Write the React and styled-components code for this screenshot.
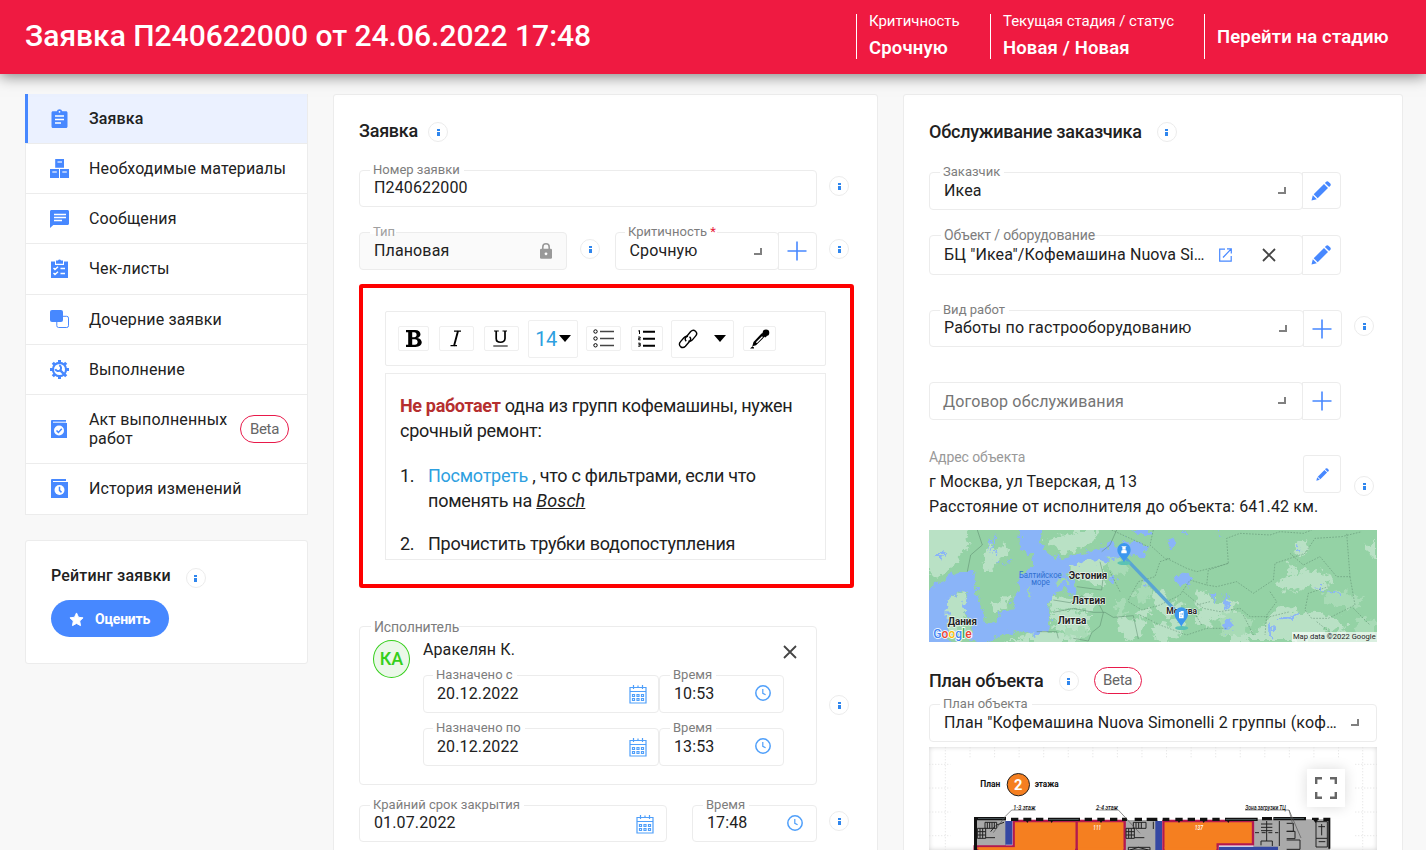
import React from "react";
import styled, { createGlobalStyle, css } from "styled-components";

const blue = "#4788ff";
const line = "#ececec";
const ink = "#212121";

const GlobalStyle = createGlobalStyle`
  * { box-sizing: border-box; }
  html, body { margin: 0; padding: 0; height: 850px; overflow: hidden; }
  body {
    background: #f8f8f8;
    color: ${ink};
    font-family: Roboto, "Liberation Sans", sans-serif;
    font-size: 16px;
    line-height: 19px;
  }
`;

/* ---------- page frame ---------- */
const Page = styled.div`
  width: 1426px;
  height: 850px;
  overflow: hidden;
  display: flex;
  flex-direction: column;
`;
const Header = styled.header`
  flex: none;
  height: 74px;
  padding: 0 25px;
  display: flex;
  align-items: flex-start;
  justify-content: space-between;
  background: #ef1a41;
  color: #fff;
  box-shadow: 0 2px 14px rgba(0, 0, 0, 0.5);
  position: relative;
`;
const PageTitle = styled.h1`
  margin: 18px 0 0;
  font-size: 30px;
  line-height: 35px;
  font-weight: 500;
`;
const HeaderInfo = styled.div`
  display: flex;
  margin-top: 14px;
`;
const HeaderCell = styled.div`
  width: ${(p) => p.$w}px;
  height: 45px;
  border-left: 1px solid #fff;
  padding-left: 12px;
  white-space: nowrap;
  ${(p) => p.$center && css`
    display: flex;
    align-items: center;
    padding: 0 0 0 12px;
  `}
`;
const HeaderLabel = styled.div`
  font-size: 15px;
  line-height: 16px;
  letter-spacing: -0.03px;
  margin-top: -1px;
`;
const HeaderValue = styled.div`
  font-size: 18.500px;
  line-height: 22px;
  font-weight: 600;
  letter-spacing: 0.15px;
  margin-top: ${(p) => p.$mt || 0}px;
`;
const Main = styled.main`
  flex: 1;
  min-height: 0;
  display: grid;
  grid-template-columns: 283px 545px 500px;
  column-gap: 25px;
  padding: 20px 0 0 25px;
`;
const Card = styled.section`
  background: #fff;
  border: 1px solid ${line};
  border-radius: 3px;
  padding: 0 25px;
`;
const ColumnCard = styled(Card)`
  margin-bottom: -12px;
`;
const Row = styled.div`
  display: flex;
  align-items: flex-start;
  height: ${(p) => p.$h}px;
  margin-top: ${(p) => p.$mt || 0}px;
`;
const SectionTitle = styled.h2`
  margin: ${(p) => p.$mt || 0}px ${(p) => p.$mr || 0}px 0 0;
  font-size: ${(p) => p.$size || 18}px;
  line-height: 21px;
  font-weight: 500;
  white-space: nowrap;
  letter-spacing: ${(p) => p.$ls ?? -0.25}px;
`;

/* ---------- small parts ---------- */
const InfoCircle = styled.span`
  flex: none;
  width: 20px;
  height: 20px;
  border: 1px solid ${line};
  border-radius: 50%;
  background: #fff;
  display: flex;
  flex-direction: column;
  align-items: center;
  justify-content: center;
  gap: 1px;
  margin: ${(p) => p.$mt || 0}px 0 0 ${(p) => p.$ml || 0}px;
  &::before, &::after {
    content: "";
    width: 3px;
    height: 2px;
    background: #2f86ee;
  }
  &::after { height: 4px; }
`;
const Beta = styled.span`
  flex: none;
  width: ${(p) => p.$w}px;
  height: ${(p) => p.$h}px;
  border: 1px solid #e8194a;
  border-radius: 14px;
  color: #666;
  font-size: 15px;
  letter-spacing: -0.35px;
  display: flex;
  align-items: center;
  justify-content: center;
`;

/* ---------- navigation ---------- */
const Side = styled.aside`
  display: flex;
  flex-direction: column;
`;
const Nav = styled.nav`
  background: #fff;
  border: solid ${line};
  border-width: 0 1px;
`;
const NavItem = styled.a`
  height: ${(p) => p.$h}px;
  display: flex;
  align-items: center;
  border-bottom: 1px solid ${line};
  padding: 0 18px ${(p) => (p.$h === 51 ? 1 : 0)}px 24px;
  ${(p) => p.$active && css`
    background: #ebf1ff;
    box-shadow: inset 3px 0 0 ${blue};
    margin-left: -1px;
    padding-left: 25px;
    font-weight: 500;
  `}
`;
const NavIcon = styled.svg`
  flex: none;
  width: 20px;
  height: 20px;
  margin-right: 19px;
`;
const NavText = styled.span`
  flex: 1;
  letter-spacing: 0.13px;
`;
const RatingCard = styled(Card)`
  height: 124px;
  margin-top: 25px;
`;
const RateButton = styled.button`
  width: 118px;
  height: 37px;
  margin-top: 12px;
  border: 0;
  border-radius: 19px;
  background: ${blue};
  color: #fff;
  font: 700 14px/19px Roboto, sans-serif;
  letter-spacing: -0.2px;
  display: flex;
  align-items: center;
  padding: 1px 0 0 18px;
  gap: 11px;
`;

/* ---------- form ---------- */
const FieldBox = styled.div`
  position: relative;
  flex: none;
  display: flex;
  width: ${(p) => p.$w}px;
  height: ${(p) => p.$h || 38}px;
  border: 1px solid ${line};
  border-radius: 4px;
  margin-left: ${(p) => p.$ml || 0}px;
  padding: ${(p) => (p.$pt ?? 8)}px 14px 0 ${(p) => (p.$pl ?? 14)}px;
  background: ${(p) => (p.$disabled ? "#fafafa" : "#fff")};
`;
const FieldLabel = styled.label`
  position: absolute;
  left: ${(p) => p.$x ?? 10}px;
  top: ${(p) => p.$y ?? -9}px;
  padding: 0 ${(p) => p.$pr ?? 4}px 0 3px;
  font-size: ${(p) => (p.$large ? 14 : 13)}px;
  line-height: ${(p) => (p.$large ? 16 : 15)}px;
  letter-spacing: ${(p) => (p.$large ? -0.14 : 0.02)}px;
  color: ${(p) => (p.$pale ? "#a0a0a0" : "#7d7d7d")};
  white-space: nowrap;
  background: linear-gradient(#fff, #fff) 0 7px / 100% 3px no-repeat;
  i { color: #e8203a; font-style: normal; }
`;
const FieldValue = styled.span`
  letter-spacing: ${(p) => p.$vls ?? 0.13}px;
  white-space: nowrap;
  color: ${(p) => (p.$pale ? "#757575" : ink)};
`;
const FieldTools = styled.span`
  position: absolute;
  right: ${(p) => p.$r}px;
  top: ${(p) => p.$t}px;
  display: flex;
`;
const Corner = styled.span`
  width: 8px;
  height: 7px;
  border: solid #808080;
  border-width: 0 2px 2px 0;
`;
const SideButton = styled.button`
  flex: none;
  width: ${(p) => p.$w || 39}px;
  height: ${(p) => p.$h || 38}px;
  margin: ${(p) => p.$mt || 0}px 0 0 ${(p) => p.$ml ?? -1}px;
  padding: 0 ${(p) => p.$pr ?? 1}px 0 0;
  border: 1px solid ${line};
  border-radius: ${(p) => (p.$solo ? "3px" : "0 4px 4px 0")};
  background: #fff;
  display: flex;
  align-items: center;
  justify-content: center;
  position: relative;
`;

/* ---------- editor ---------- */
const Highlight = styled.div`
  width: 495px;
  height: 304px;
  margin-top: 14px;
  border: 4px solid #fe0000;
  border-radius: 3px;
  padding: 23px 24px 0 22px;
`;
const Toolbar = styled.div`
  height: 55px;
  border: 1px solid ${line};
  border-radius: 2px;
  display: flex;
  align-items: center;
  padding-left: 12px;
`;
const Tool = styled.button`
  flex: none;
  width: ${(p) => p.$w}px;
  height: ${(p) => (p.$tall ? 38 : 25)}px;
  margin: 0 ${(p) => p.$mr}px 0 0;
  padding: 0 ${(p) => p.$pr ?? 1}px 0 0;
  border: 1px solid #efefef;
  border-radius: 2px;
  background: #fff;
  display: flex;
  align-items: center;
  justify-content: center;
`;
const SizeText = styled.span`
  font: 400 20px/24px Roboto, sans-serif;
  letter-spacing: -0.6px;
  color: #2ea0e0;
  margin: 0 2px 0 1px;
`;
const Caret = styled.span`
  border: solid transparent;
  border-width: 7px 6px 0;
  border-top-color: #000;
  margin: 0 0 1px ${(p) => p.$ml || 0}px;
`;
const EditorBody = styled.div`
  height: 187px;
  margin-top: 7px;
  border: 1px solid ${line};
  padding: 19px 14px 0;
  font-size: 18px;
  line-height: 25px;
  letter-spacing: -0.26px;
  overflow: hidden;
`;
const EditorText = styled.p`
  margin: 0;
  white-space: nowrap;
  b { color: #b62f2f; font-weight: 700; letter-spacing: -0.35px; }
`;
const EditorItem = styled.div`
  display: grid;
  grid-template-columns: 28px 1fr;
  margin-top: ${(p) => p.$mt}px;
  white-space: nowrap;
  a { color: #2ea0e0; }
  i { letter-spacing: 0.1px; }
`;

/* ---------- performer ---------- */
const Performer = styled.div`
  position: relative;
  width: 458px;
  height: 159px;
  border: 1px solid ${line};
  border-radius: 4px;
  padding: 13px 0 0 13px;
  display: flex;
`;
const Avatar = styled.div`
  width: 37px;
  height: 38px;
  border: 1px solid #35cf1b;
  border-radius: 50%;
  background: #ebf8e9;
  color: #35cf1b;
  font-size: 18px;
  font-weight: 500;
  display: flex;
  align-items: center;
  justify-content: center;
  padding-bottom: 2px;
  margin-right: 13px;
`;
const PerformerBody = styled.div`
  width: 361px;
`;
const PerformerHead = styled.div`
  display: flex;
  justify-content: space-between;
  height: 35px;
  span { letter-spacing: 0.1px; }
  svg { margin: 5px -13px 0 0; }
`;

/* ---------- address, map, plan ---------- */
const Address = styled.div`
  width: 374px;
  white-space: nowrap;
  line-height: 25px;
  letter-spacing: 0.13px;
  small {
    display: block;
    font-size: 14px;
    line-height: 20px;
    letter-spacing: -0.08px;
    color: #999;
    padding-bottom: 2px;
  }
`;
const BetaSlot = styled.div`
  margin-left: 15px;
`;
const Drawing = styled.svg`
  display: block;
  width: 448px;
  height: ${(p) => p.$h}px;
  margin-top: ${(p) => p.$mt || 0}px;
`;
const PlanFrame = styled.div`
  position: relative;
  width: 448px;
  margin-top: 5px;
  box-shadow: inset 0 0 5px rgba(0, 0, 0, 0.18);
`;
const FullscreenButton = styled.button`
  position: absolute;
  left: 378px;
  top: 22px;
  width: 38px;
  height: 38px;
  padding: 0 1px 0 0;
  border: 0;
  background: #fff;
  box-shadow: 0 0 14px rgba(0, 0, 0, 0.14);
  display: flex;
  align-items: center;
  justify-content: center;
`;

/* ---------- icons ---------- */
const navIcons = {
  request: (
    <g>
      <path fill={blue} d="M3 2.3h3.800a2.800 2.800 0 0 1 5.400 0H16c.9 0 1.500.6 1.500 1.500v13.700c0 .9-.6 1.500-1.500 1.500H3c-.9 0-1.500-.6-1.500-1.500V3.800c0-.9.6-1.500 1.500-1.500z" />
      <circle cx="9.500" cy="2.800" r=".9" fill="#fff" />
      <path stroke="#fff" strokeWidth="1.500" d="M5 7h9M5 10.500h9M5 14h6" />
    </g>
  ),
  boxes: (
    <g fill={blue}>
      <path d="M5.200 0h8.800v8.800H5.200zM0 10h9v9H0zM10 10h9v9h-9z" />
      <path stroke="#cfe0ff" strokeWidth="1.400" d="M7.500 3h4.500M2.300 13h4.500M12.300 13h4.500" />
    </g>
  ),
  chat: (
    <g>
      <path fill={blue} d="M1.500 1h16c.9 0 1.500.6 1.500 1.500v12c0 .9-.6 1.500-1.500 1.500H3.300L0 19V2.500C0 1.600.6 1 1.500 1z" />
      <path stroke="#fff" strokeWidth="1.500" d="M4 5.500h12M4 8.500h12M4 11.500h8" />
    </g>
  ),
  checklist: (
    <g>
      <path fill={blue} d="M1 2.500h17V19H1z" />
      <path fill="#fff" d="M5 2h9v4H5z" />
      <path fill={blue} d="M6 1.500h2a1.600 1.600 0 0 1 3 0h2v3.200H6z" />
      <path fill="none" stroke="#fff" strokeWidth="1.400" d="M3.500 9l1.500 1.600L8 7.800M3.500 14l1.500 1.600L8 12.800M10.500 9.500H15M10.500 14.500H15" />
    </g>
  ),
  copies: (
    <g>
      <rect x="6.800" y="6.300" width="11.700" height="11.200" rx="1.800" fill="#fff" stroke={blue} />
      <rect x="0" y="0" width="13" height="12" rx="2" fill={blue} />
    </g>
  ),
  gear: (
    <g>
      <circle cx="9.500" cy="9.500" r="6.600" fill="none" stroke={blue} strokeWidth="2.200" />
      <g stroke={blue} strokeWidth="3">
        <path d="M9.500 0v3M9.500 16v3M0 9.500h3M16 9.500h3M2.800 2.800l2 2M14.200 14.200l2 2M2.800 16.200l2-2M14.200 4.800l2-2" />
      </g>
      <path fill="none" stroke={blue} strokeWidth="2.400" d="M9.800 9.800l4.500 4.500" />
      <path fill="none" stroke={blue} strokeWidth="2" d="M9.200 5.200a3 3 0 1 1-3.900 3.900" />
    </g>
  ),
  act: (
    <g>
      <path fill={blue} d="M1.500 1H16v3h1v15H1V2z" />
      <path stroke="#fff" strokeWidth="1" d="M3 3.200h13" />
      <circle cx="9" cy="11.500" r="5" fill="#fff" />
      <path fill="none" stroke={blue} strokeWidth="1.500" d="M6.500 11.500l1.900 1.900 3.400-3.600" />
    </g>
  ),
  history: (
    <g>
      <path fill={blue} d="M1.500 0H16v3h2v16H1V1z" />
      <path stroke="#fff" strokeWidth="1" d="M3 2.500h13" />
      <circle cx="9.500" cy="11" r="5" fill="#fff" />
      <path fill="none" stroke={blue} strokeWidth="1.500" d="M9.500 7.800V11.400l2 2" />
    </g>
  ),
};

const Pencil = ({ size = 20 }) => (
  <svg width={size} height={size} viewBox="0 0 20 20" fill={blue}>
    <path d="M.5 19.500l1.300-5.300 4 4zM2.700 13.300L13 3l4 4L6.700 17.300zM13.900 1.900l1-1a2 2 0 0 1 2.800 0l1.400 1.400a2 2 0 0 1 0 2.800l-1 1z" />
  </svg>
);
const Plus = () => (
  <svg width="20" height="20" viewBox="0 0 20 20">
    <path stroke={blue} strokeWidth="1.600" d="M10 .5v19M.5 10h19" />
  </svg>
);
const Cross = () => (
  <svg width="14" height="14" viewBox="0 0 14 14">
    <path stroke="#444" strokeWidth="1.800" d="M1 1l12 12M13 1L1 13" />
  </svg>
);
const External = () => (
  <svg width="13" height="14" viewBox="0 0 13 14">
    <path fill="none" stroke={blue} strokeWidth="1.200" d="M6 1.200H.7v12h11.500V8M8 .9h4.300v4.500M12 1.200L4 9.500" />
  </svg>
);
const Lock = () => (
  <svg width="12" height="16" viewBox="0 0 12 16">
    <path fill="none" stroke="#999" strokeWidth="1.600" d="M2.800 6.500V4a3.200 3.200 0 0 1 6.400 0v2.500" />
    <rect y="5.800" width="12" height="10" rx="1.300" fill="#999" />
    <circle cx="6" cy="10.800" r="1.400" fill="#fff" />
  </svg>
);
const Clock = () => (
  <svg width="16" height="16" viewBox="0 0 16 16" fill="none" stroke="#4f9ffa">
    <circle cx="8" cy="8" r="7.200" strokeWidth="1.500" />
    <path strokeWidth="1.200" d="M7.800 4v4.300l2.800 1.500" />
  </svg>
);
const Calendar = () => (
  <svg width="18" height="19" viewBox="0 0 18 19" fill="none" stroke="#4f9ffa">
    <path strokeWidth="1.200" d="M1 2.500h16v15.500H1zM1 6.500h16M4.500 0v4M13.500 0v4M9 .5v2" />
    <path strokeWidth="1.200" d="M3.500 9.500h2v2h-2zM8 9.500h2v2H8zM12.500 9.500h2v2h-2zM3.500 13.500h2v2h-2zM8 13.500h2v2H8zM12.500 13.500h2v2h-2z" />
  </svg>
);
const Star = () => (
  <svg width="15" height="15" viewBox="0 0 24 24" fill="#fff" stroke="#fff" strokeWidth="1.500" strokeLinejoin="round">
    <path d="M12 1.500l3.200 6.900 7.300.9-5.400 5.100 1.400 7.400L12 18.200l-6.500 3.600 1.400-7.400L1.500 9.300l7.300-.9z" />
  </svg>
);
const BoldIcon = () => (
  <svg width="16" height="17" viewBox="0 0 16 17">
    <path fillRule="evenodd" d="M0 0h9c6.500 0 7.200 6.700 2.200 8 6.600 1 6 9-1.700 9H0v-2.200h2.200V2.200H0zM6.200 2.200v5h2c3.200 0 3.200-5 0-5zM6.200 9.300v5.500h2.600c3.800 0 3.800-5.500 0-5.500z" />
  </svg>
);
const ItalicIcon = () => (
  <svg width="12" height="17" viewBox="0 0 12 17" fill="none" stroke="#000">
    <path strokeWidth="1.200" d="M4 1.100h7M.5 15.700h6.500" />
    <path strokeWidth="1.900" d="M8 1L4 16" />
  </svg>
);
const UnderlineIcon = () => (
  <svg width="15" height="17" viewBox="0 0 15 17" fill="none" stroke="#000">
    <path strokeWidth="1.200" d="M1 1h4.800M9.500 1H14M.3 16h14.400" />
    <path strokeWidth="1.700" d="M3.200 1v7.500c0 5 8.800 5 8.800 0V1" />
  </svg>
);
const BulletsIcon = () => (
  <svg width="21" height="19" viewBox="0 0 21 19" fill="none" stroke="#000">
    <path d="M7 2.500h14M7 9.500h14M7 16.500h14" strokeWidth="1.300" stroke="#444" />
    <circle cx="2.500" cy="2.500" r="1.700" />
    <circle cx="2.500" cy="9.500" r="1.700" />
    <circle cx="2.500" cy="16.300" r="1.700" />
  </svg>
);
const NumbersIcon = () => (
  <svg width="17" height="17" viewBox="0 0 17 17" fill="none" stroke="#000">
    <path strokeWidth="1.900" d="M5 1.800h12M5 8.700h12M5 15.700h12" />
    <path strokeWidth="1" d="M.3 1L1.500.5V4M.2 7h2v1.300H.6v1.500h2M.2 13.200h2v3H.2M.5 14.700h1.500" />
  </svg>
);
const LinkIcon = () => (
  <svg width="20" height="20" viewBox="0 0 20 20" fill="none" stroke="#000" strokeWidth="1.400">
    <path d="M8.200 12.200c-1.600-1.600-1.200-3 0-4.200l4.500-5.500c1.400-1.400 3.400-1.500 4.800-.3 1.400 1.300 1.500 3.200.2 4.700l-3.500 4.200c-1.200 1.200-2.500 1.500-3.800.8" />
    <path d="M11.500 7.800c1.700 1.500 1.300 3.200.2 4.500l-4.300 5c-1.400 1.400-3.500 1.500-4.900.3-1.400-1.300-1.500-3.300-.2-4.700l3.600-4.100C7 7.600 8.700 7 10 7.600" />
  </svg>
);
const DropperIcon = () => (
  <svg width="20" height="20" viewBox="0 0 20 20">
    <circle cx="16" cy="3.800" r="3.300" />
    <path d="M13.300 3.300l3.700 3.600-1.800 1.700-3.800-3.600z" />
    <path fillRule="evenodd" d="M11.500 4.500L3.500 13l-1.200 4.200 3.700-1 8.800-8.600zM12 7.200l1 .9-5.600 5.700-1.400.3.400-1.300z" />
    <path d="M0 19.500l2.500-2.300 1.500 1.400v.9z" />
  </svg>
);
const FullscreenIcon = () => (
  <svg width="22" height="22" viewBox="0 0 22 22" fill="none" stroke="#666" strokeWidth="2.400">
    <path d="M1.200 7V1.200H7M15 1.200h5.800V7M1.200 15v5.800H7M20.800 15v5.800H15" />
  </svg>
);

/* ---------- map and floor plan ---------- */
const MapDrawing = () => (
  <Drawing $h={112} $mt={11} viewBox="27 15 1344 336">
    <defs>
      <filter id="coast" x="0" y="0" width="100%" height="100%" colorInterpolationFilters="sRGB">
        <feTurbulence type="fractalNoise" baseFrequency="0.05" numOctaves="3" seed="4" />
        <feDisplacementMap in="SourceGraphic" scale="42" xChannelSelector="R" yChannelSelector="G" />
      </filter>
    </defs>
    <rect x="27" y="15" width="1344" height="336" fill="#94d2a5" />
    <g filter="url(#coast)">
      <rect x="0" y="-10" width="1400" height="390" fill="#94d2a5" />
      <g fill="#b9e1c5">
        <path d="M20 0h135l-20 45 20 25-40 20-10 35-40 25-45-10z" />
        <path d="M180 90l30-30 25 10 20-15 10 30-30 20-20 40-20-10zM215 235l60-30-15 35-35 25z" />
        <path d="M380 45l50-15 50-15 55 0-10 35-60 30-40 5z" />
        <path d="M80 215l60-15-5 60 15 55-55 20-20-50zM165 275l30 5 15 45-45 5z" />
        <path d="M455 120l55-15 50 0-10 30 5 45-40 0-30-10-30-20zM395 210l60 15 60-25 20 40-30 25-50-15-65 10zM395 262l60-8 60 22-10 35-40 20-60-20z" />
        <path d="M590 270l30 10 40 0 20 15-20 40-35 15-30-30zM640 262l40-12 20 16-30 14zM700 195l30 5 20 40 30-15 20 20-40 20-20 20-20-25-20-30zM705 290l40 10 20-20 30 20-20 35-60 16-20-25zM830 195l30 10 20 25 50-5 20 20-20 30-40 5-30 30-30-20 10-35-15-25z" />
        <path d="M1075 170l40-25 40-10 40 5 40 15 0 20-40 20-30-10-40 15-50-10zM1080 245l60 20 50-5 60 20 30 20-10 25-50-10-40 30H970l60-45zM930 330l40-10 20 31h-60z" />
        <path d="M1125 60l25-15 15 25-20 30-25-15zM1105 115l30 15-20 20zM1340 60l31-20v60l-25-5zM290 340l90-22 110 20-30 13H250zM570 115l25-20 10 20-20 20z" />
      </g>
      <g fill="#a8dbb6">
        <path d="M560 95l50 8 15 35-50 15zM640 205l40-35 15 40-45 30zM900 275l50-15 50 25-35 45-55 0zM1210 205l70-10 50 35-40 25-70-20z" />
        <path d="M1315 275l56 10v60h-60zM435 305l70 10-20 25-50-8zM590 225l20 0 5 40-20 10z" />
      </g>
      <path fill="#8ab4f8" d="M10 195L65 170L75 160L100 150L140 142L160 130L168 150L165 185L180 225L192 270L200 290L232 288L245 255L285 240L295 200L290 170L300 150L340 125L335 95L300 70L296 40L303 0L372 0L362 50L375 75L405 100L450 95L500 80L545 65L590 55L602 85L590 100L540 108L500 110L455 122L445 150L462 165L470 195L462 212L440 190L400 205L385 245L395 290L390 315L350 330L290 318L260 325L220 345L190 360L150 345L160 300L140 270L130 240L145 205L120 198L90 215L80 250L80 300L95 370L10 370Z" />
      <g fill="#8ab4f8">
        <path d="M612 48l25-5 25 12 16 15-5 22-35 3-25-17zM635 10h50l8 20-25 3-20-8zM742 50l18-13 10 18-13 18-8-13zM770 150l18-4 30 15-10 18-22-5-3 18-15-13zM572 150l10-5 3 28-11-4zM868 207l20 5-5 20zM914 207l12 15-5 35-8-10zM910 302l20-20 12 22-15 18zM1080 276l33 0 28-17 4 6-28 20-37-3zM1050 300l7-5 4 45-9 0zM1132 62l9 9-3 12-7-7zM1222 196l44 15-4 6-40-15zM665 170l16 6-5 8z" />
        <path d="M225 35l8-4-8 42-8 24zM50 90l22-9-8 26zM206 45l8 0-5 40zM265 100l7 7-16 14zM232 105l10 5-9 9zM780 20l22 5-9 7zM890 20l9 5-6 13zM1192 180l12 4 7 10-18-6z" />
      </g>
      <g fill="#9ed6ad">
        <path d="M326 188l9-4-7 38-7-4zM279 212l9-4-10 20zM410 165l26-6 7 13-28 10zM412 148l16 0-5 9zM120 295l30 0 8 22-18 16-26-8z" />
      </g>
    </g>
    <g fill="none" stroke="#59876b" strokeWidth="1.500">
      <path d="M142 140l10-50 35-30-15-45M590 15l-20 45-25 20M540 110l10 40-5 45-75-10M400 225l50 8 35-20 50 20 15 30-10 40-25 20-10 25-45-8M400 262l60-12 60 12 35 0 25 15 60-5 15 70M350 320l60 0 5 20" />
      <g strokeDasharray="5 4">
        <path d="M625 225l30-55 50-15 15-45 30-10M600 200l-30-60M700 15l-10 45 50 45M740 100l60 30 30 10 60-15 35-10-5-75 40-15 90 5 30-10 70 5 25-10M925 115l-60 20-5 45 30 5 60-15 50 35 60-40 5-50 90-30 30-45 80-5 60-15M1110 85l40 35 50-25 50 60 40 0-10-130M1290 155l15 85-80 40-50 0-20-25 10-50 60-20M625 230l40 25 55-15 60-30 30-45 50 15M660 270l60 30 80 30 60-20 60 0M790 200l60 50 50 10 60-10 30 25 60 0 60-15M845 300l-30-50M870 230l-40 10M1050 200l20 30-30 40-5 60" />
        <path d="M970 270l30 60M1190 290l50 40M1300 250l50 50M575 15l110 50" />
      </g>
    </g>
    <path d="M612 95L784 275" stroke="#5aa5d3" strokeWidth="10" />
    <ellipse cx="612" cy="114" rx="20" ry="6" fill="#5cc3b4" />
    <ellipse cx="785" cy="309" rx="20" ry="6" fill="#5cc3b4" />
    <g fontFamily="Roboto, sans-serif" fontWeight="700" fontSize="30" fill="#222" stroke="#fff" strokeWidth="3" paintOrder="stroke" textAnchor="middle">
      <text x="504" y="161" textLength="116" lengthAdjust="spacingAndGlyphs">Эстония</text>
      <text x="506" y="237" textLength="100" lengthAdjust="spacingAndGlyphs">Латвия</text>
      <text x="456" y="298" textLength="86" lengthAdjust="spacingAndGlyphs">Литва</text>
      <text x="127" y="299" textLength="88" lengthAdjust="spacingAndGlyphs">Дания</text>
      <text x="785" y="267" fontSize="25" textLength="92" lengthAdjust="spacingAndGlyphs">Москва</text>
    </g>
    <g fontFamily="Roboto, sans-serif" fontSize="26" fill="#2e6fd0" textAnchor="middle">
      <text x="361" y="158" textLength="128" lengthAdjust="spacingAndGlyphs">Балтийское</text>
      <text x="362" y="181" textLength="56" lengthAdjust="spacingAndGlyphs">море</text>
    </g>
    {[[612, 112, "p"], [784, 305, "b"]].map(([x, y, t]) => (
      <g key={t} transform={`translate(${x} ${y})`}>
        <path fill="#3c97ee" d="M0 0C-6-14-20-22-20-38a20 20 0 0 1 40 0C20-22 6-14 0 0z" />
        {t === "p" ? (
          <path fill="#fff" d="M-5-46h10v8H-5zM-8-34c0-4 16-4 16 0v7H-8zM-7-49H7v2H-7z" />
        ) : (
          <path fill="#fff" fillRule="evenodd" d="M-7-44h5v-3h9v22H-7zM-2-40v4h2v-4zM3-40v4h2v-4zM-2-33v4h2v-4z" />
        )}
      </g>
    ))}
    <g fontFamily="Roboto, sans-serif" fontWeight="500" fontSize="40" stroke="#fff" strokeWidth="5" paintOrder="stroke">
      <text x="40" y="338" textLength="115" lengthAdjust="spacingAndGlyphs">
        <tspan fill="#4285f4">G</tspan><tspan fill="#ea4335">o</tspan><tspan fill="#fbbc05">o</tspan><tspan fill="#4285f4">g</tspan><tspan fill="#34a853">l</tspan><tspan fill="#ea4335">e</tspan>
      </text>
    </g>
    <rect x="1116" y="321" width="255" height="30" fill="#fff" fillOpacity=".65" />
    <text x="1119" y="343" textLength="248" lengthAdjust="spacingAndGlyphs" fontFamily="Roboto, sans-serif" fontSize="23" fill="#222">Map data ©2022 Google</text>
  </Drawing>
);

const PlanDrawing = () => (
  <Drawing $h={103} viewBox="-93 -39 1344 309">
    <g stroke="#ddd" strokeWidth="2" strokeDasharray="4 5">
      {Array.from({ length: 16 }, (_, i) => (
        <path key={i} d={`M${30 + i * 73.700} -39v36`} />
      ))}
      <path d="M-44-39V270M1208-39V270M-93 13h64M-93 84h64M-93 156h64M-93 227h64M1185 13h66M1185 84h66M1185 156h66M1185 227h66" />
    </g>
    <path fill="#aaa" d="M44 178h94v92H44zM495 180h98v90h-98zM880 178h230v92H880z" />
    <path fill="#f57f20" stroke="#b3194f" strokeWidth="7" d="M161 183h189v87H44v-11h117zM350 183h144v87H350zM610 183h269v70H773v17H610z" />
    <path fill="#f57f20" d="M55 262h120v10H55zM165 190h180v80H165zM354 262h136v10H354zM614 262h155v10H614z" />
    <path fill="#3548a3" d="M136 183h21v71h-21zM586 183h20v87h-20zM777 260h177v12H777z" />
    <g fill="#111">
      <path d="M42 171h96v10H42zM42 171h9v99h-9zM153 173h22v10h-22zM190 173h24v10h-24zM228 173h22v10h-22zM264 173h96v10h-96zM374 173h22v10h-22zM412 173h22v10h-22zM450 173h22v10h-22zM486 173h15v10h-15zM524 173h22v10h-22zM560 173h32v10h-32zM608 173h20v10h-20zM646 173h22v10h-22zM683 173h22v10h-22zM720 173h22v10h-22zM757 173h22v10h-22zM795 173h98v10h-98zM906 171h30v10h-30zM940 171h98v10h-98zM1056 173h20v7h-20zM1090 173h21v10h-21zM1105 176h6v90h-6z" />
      <path d="M197 181h10l-5 8zM270 181h10l-5 8zM418 181h10l-5 8zM652 181h10l-5 8zM726 181h10l-5 8zM800 181h10l-5 8zM1060 180h14l-7 9z" />
      <path d="M54 175h80v2H54zM266 177h90v2h-90zM797 177h92v2h-92zM942 175h90v2h-90z" fill="#57666a" />
    </g>
    <g fill="none" stroke="#222" strokeWidth="3">
      <path d="M52 205h25v30H52zM60 205v30M68 205v30M52 215h25M52 225h25M75 187h35v18H75zM82 187v18M89 187v18M96 187v18M103 187v18M110 195l22-8M77 233h28M92 215l14-18" />
      <path d="M498 205h25v30h-25zM506 205v30M514 205v30M498 215h25M498 225h25M520 187h38v18h-38zM528 187v18M536 187v18M544 187v18M523 233h30M580 185v22" />
      <path d="M505 262h65v8h-65zM510 270l25-8 30 8M920 183v60M903 192h34M903 202h34M903 212h34M903 256v-13h34v15M958 183v75M1068 185h34v76h-34zM1068 235h34M1075 200h20M1085 192v34M980 190h20v24h-20M980 214h25v22h-25M980 240h40v28h-40M1076 245h20" />
      <path strokeDasharray="12 8" d="M885 218h70" />
      <path strokeWidth="2" d="M135 170l20-20h72M135 170l-35 48M407 150h68l65 70M855 150h132l36 84M987 150l13 50" stroke="#555" />
    </g>
    <circle cx="175" cy="74" r="33.500" fill="#f57f20" stroke="#222" strokeWidth="3" />
    <g fontFamily="Roboto, sans-serif" fill="#111" fontWeight="700">
      <text x="61" y="82" fontSize="27" textLength="60" lengthAdjust="spacingAndGlyphs">План</text>
      <text x="224" y="82" fontSize="27" textLength="72" lengthAdjust="spacingAndGlyphs">этажа</text>
      <text x="175" y="89" fontSize="44" fill="#fff" textAnchor="middle">2</text>
      <g fontStyle="italic" fontSize="20" fontWeight="500">
        <text x="160" y="149" textLength="66" lengthAdjust="spacingAndGlyphs">1-3 этаж</text>
        <text x="408" y="149" textLength="66" lengthAdjust="spacingAndGlyphs">2-4 этаж</text>
        <text x="856" y="149" textLength="122" lengthAdjust="spacingAndGlyphs">Зона загрузки ТЦ</text>
        <text x="400" y="209" fill="#fff" textLength="23" lengthAdjust="spacingAndGlyphs">111</text>
        <text x="704" y="209" fill="#fff" textLength="25" lengthAdjust="spacingAndGlyphs">137</text>
      </g>
    </g>
  </Drawing>
);

/* ---------- composed fields ---------- */
const Field = ({ label, value, required, children, ...rest }) => (
  <FieldBox {...rest}>
    {label && (
      <FieldLabel $pale={rest.$disabled} $x={rest.$lx} $pr={rest.$lpr} $large={rest.$large}>
        {label}
        {required && <i> *</i>}
      </FieldLabel>
    )}
    <FieldValue $pale={!label} $vls={rest.$vls}>{value}</FieldValue>
    {children}
  </FieldBox>
);
const DateTime = ({ label, date, time, mt }) => (
  <Row $h={38} $mt={mt}>
    <Field label={label} value={date} $w={236} $lx={9} $pl={13}>
      <FieldTools $r={11} $t={9}><Calendar /></FieldTools>
    </Field>
    <Field label="Время" value={time} $w={125}>
      <FieldTools $r={12} $t={9}><Clock /></FieldTools>
    </Field>
  </Row>
);

const navigation = [
  { icon: "request", text: "Заявка", h: 50, active: true },
  { icon: "boxes", text: "Необходимые материалы", h: 50 },
  { icon: "chat", text: "Сообщения", h: 50 },
  { icon: "checklist", text: "Чек-листы", h: 51 },
  { icon: "copies", text: "Дочерние заявки", h: 50 },
  { icon: "gear", text: "Выполнение", h: 50 },
  { icon: "act", text: "Акт выполненных работ", h: 69, beta: true },
  { icon: "history", text: "История изменений", h: 51 },
];

export default function App() {
  return (
    <Page>
      <GlobalStyle />
      <Header>
        <PageTitle>Заявка П240622000 от 24.06.2022 17:48</PageTitle>
        <HeaderInfo>
          <HeaderCell $w={134}>
            <HeaderLabel>Критичность</HeaderLabel>
            <HeaderValue $mt={8}>Срочную</HeaderValue>
          </HeaderCell>
          <HeaderCell $w={214}>
            <HeaderLabel>Текущая стадия / статус</HeaderLabel>
            <HeaderValue $mt={8}>Новая / Новая</HeaderValue>
          </HeaderCell>
          <HeaderCell $w={197} $center>
            <HeaderValue>Перейти на стадию</HeaderValue>
          </HeaderCell>
        </HeaderInfo>
      </Header>
      <Main>
        <Side>
          <Nav>
            {navigation.map((n) => (
              <NavItem key={n.icon} $h={n.h} $active={n.active}>
                <NavIcon viewBox="0 0 20 20">{navIcons[n.icon]}</NavIcon>
                <NavText>{n.text}</NavText>
                {n.beta && <Beta $w={49} $h={28}>Beta</Beta>}
              </NavItem>
            ))}
          </Nav>
          <RatingCard>
            <Row $h={21} $mt={26}>
              <SectionTitle $size={16} $mt={-2} $mr={15} $ls={0.17}>Рейтинг заявки</SectionTitle>
              <InfoCircle $mt={1} />
            </Row>
            <RateButton><Star />Оценить</RateButton>
          </RatingCard>
        </Side>

        <ColumnCard>
          <Row $h={22} $mt={26}>
            <SectionTitle $mt={-1} $mr={10}>Заявка</SectionTitle>
            <InfoCircle $mt={1} />
          </Row>
          <Row $h={37} $mt={27}>
            <Field label="Номер заявки" value="П240622000" $w={458} $h={37} $pt={7} />
            <InfoCircle $ml={12} $mt={6} />
          </Row>
          <Row $h={38} $mt={25}>
            <Field label="Тип" value="Плановая" $w={208} $disabled $lpr={1}>
              <FieldTools $r={14} $t={10}><Lock /></FieldTools>
            </Field>
            <InfoCircle $ml={13} $mt={7} />
            <Field label="Критичность" required value="Срочную" $w={164} $ml={15} $lx={9} $pl={13.500} $lpr={1}>
              <FieldTools $r={16} $t={15}><Corner /></FieldTools>
            </Field>
            <SideButton><Plus /></SideButton>
            <InfoCircle $ml={12} $mt={7} />
          </Row>
          <Highlight>
            <Toolbar>
              <Tool $w={31} $mr={10} $pr={0}><BoldIcon /></Tool>
              <Tool $w={35} $mr={10}><ItalicIcon /></Tool>
              <Tool $w={35} $mr={9} $pr={2}><UnderlineIcon /></Tool>
              <Tool $w={50} $mr={8} $tall><SizeText>14</SizeText><Caret /></Tool>
              <Tool $w={35} $mr={10}><BulletsIcon /></Tool>
              <Tool $w={32} $mr={8}><NumbersIcon /></Tool>
              <Tool $w={63} $mr={9} $tall><LinkIcon /><Caret $ml={16} /></Tool>
              <Tool $w={33} $mr={0} $pr={0}><DropperIcon /></Tool>
            </Toolbar>
            <EditorBody>
              <EditorText>
                <b>Не работает</b> одна из групп кофемашины, нужен
                <br />
                срочный ремонт:
              </EditorText>
              <EditorItem $mt={20}>
                <span>1.</span>
                <span>
                  <a>Посмотреть</a> , что с фильтрами, если что
                  <br />
                  поменять на <i><u>Bosch</u></i>
                </span>
              </EditorItem>
              <EditorItem $mt={18}>
                <span>2.</span>
                <span>Прочистить трубки водопоступления</span>
              </EditorItem>
            </EditorBody>
          </Highlight>
          <Row $h={159} $mt={38}>
            <Performer>
              <FieldLabel $x={11} $y={-8} $pr={0} $large>Исполнитель</FieldLabel>
              <Avatar>КА</Avatar>
              <PerformerBody>
                <PerformerHead><span>Аракелян К.</span><Cross /></PerformerHead>
                <DateTime label="Назначено с" date="20.12.2022" time="10:53" />
                <DateTime label="Назначено по" date="20.12.2022" time="13:53" mt={15} />
              </PerformerBody>
            </Performer>
            <InfoCircle $ml={12} $mt={69} />
          </Row>
          <Row $h={37} $mt={20}>
            <Field label="Крайний срок закрытия" value="01.07.2022" $w={308} $h={37} $pt={7}>
              <FieldTools $r={12} $t={9}><Calendar /></FieldTools>
            </Field>
            <Field label="Время" value="17:48" $w={125} $h={37} $pt={7} $ml={25}>
              <FieldTools $r={13} $t={9}><Clock /></FieldTools>
            </Field>
            <InfoCircle $ml={12} $mt={6} />
          </Row>
        </ColumnCard>

        <ColumnCard>
          <Row $h={22} $mt={27}>
            <SectionTitle $mt={-1} $mr={15}>Обслуживание заказчика</SectionTitle>
            <InfoCircle />
          </Row>
          <Row $h={38} $mt={28}>
            <Field label="Заказчик" value="Икеа" $w={374}>
              <FieldTools $r={16} $t={14}><Corner /></FieldTools>
            </Field>
            <SideButton $h={37}><Pencil /></SideButton>
          </Row>
          <Row $h={40} $mt={25}>
            <Field label="Объект / оборудование" value={'БЦ "Икеа"/Кофемашина Nuova Si…'} $w={374} $h={40} $pt={9} $lx={11} $lpr={0} $large>
              <FieldTools $r={70} $t={12}><External /></FieldTools>
              <FieldTools $r={26} $t={12}><Cross /></FieldTools>
            </Field>
            <SideButton $h={40}><Pencil /></SideButton>
          </Row>
          <Row $h={37} $mt={35}>
            <Field label="Вид работ" value="Работы по гастрооборудованию" $w={375} $h={37} $pt={7}>
              <FieldTools $r={16} $t={14}><Corner /></FieldTools>
            </Field>
            <SideButton $h={37}><Plus /></SideButton>
            <InfoCircle $ml={12} $mt={6} />
          </Row>
          <Row $h={38} $mt={35}>
            <Field value="Договор обслуживания" $w={374} $pt={9} $pl={13} $vls={0.16}>
              <FieldTools $r={16} $t={14}><Corner /></FieldTools>
            </Field>
            <SideButton $pr={0}><Plus /></SideButton>
          </Row>
          <Row $h={72} $mt={27}>
            <Address>
              <small>Адрес объекта</small>
              г Москва, ул Тверская, д 13
              <br />
              Расстояние от исполнителя до объекта: 641.42 км.
            </Address>
            <SideButton $solo $w={38} $ml={0} $mt={8} $pr={0}><Pencil size={13} /></SideButton>
            <InfoCircle $ml={13} $mt={29} />
          </Row>
          <MapDrawing />
          <Row $h={27} $mt={25}>
            <SectionTitle $mt={3} $mr={15}>План объекта</SectionTitle>
            <InfoCircle $mt={4} />
            <BetaSlot><Beta $w={48} $h={27}>Beta</Beta></BetaSlot>
          </Row>
          <Row $h={38} $mt={10}>
            <Field label="План объекта" value={'План "Кофемашина Nuova Simonelli 2 группы (коф…'} $w={448} $vls={0.12}>
              <FieldTools $r={17} $t={14}><Corner /></FieldTools>
            </Field>
          </Row>
          <PlanFrame>
            <PlanDrawing />
            <FullscreenButton><FullscreenIcon /></FullscreenButton>
          </PlanFrame>
        </ColumnCard>
      </Main>
    </Page>
  );
}
